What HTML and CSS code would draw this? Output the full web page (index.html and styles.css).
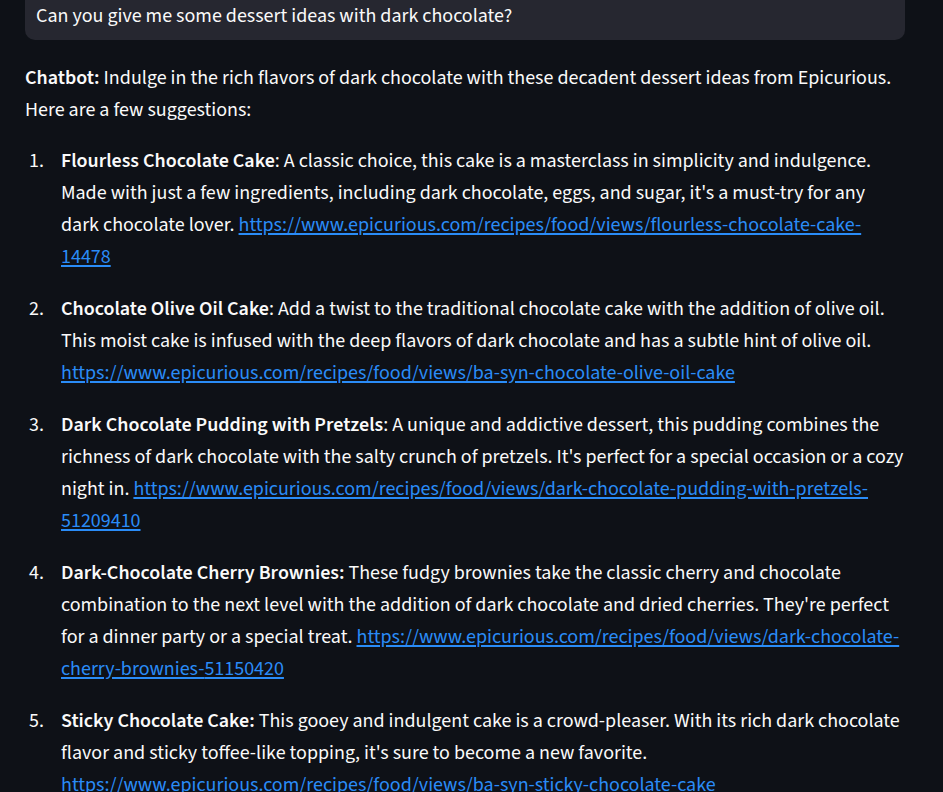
FILE: index.html
```html
<!DOCTYPE html>
<html lang="en">
<head>
<meta charset="utf-8">
<title>Chatbot</title>
<link rel="stylesheet" href="styles.css">
</head>
<body>
<main class="chat">
  <div class="user-msg">Can you give me some dessert ideas with dark chocolate?</div>
  <div class="bot-msg">
    <p class="intro"><strong>Chatbot:</strong> Indulge in the rich flavors of dark chocolate with these decadent dessert ideas from Epicurious. Here are a few suggestions:</p>
    <ol class="ideas">
      <li><div><strong>Flourless Chocolate Cake</strong>: A classic choice, this cake is a masterclass in simplicity and indulgence. Made with just a few ingredients, including dark chocolate, eggs, and sugar, it's a must-try for any dark chocolate lover. <a href="#">https://www.epicurious.com/recipes/food/views/flourless-chocolate-cake-<wbr>14478</a></div></li>
      <li><div><strong>Chocolate Olive Oil Cake</strong>: Add a twist to the traditional chocolate cake with the addition of olive oil. This moist cake is infused with the deep flavors of dark chocolate and has a subtle hint of olive oil. <a href="#">https://www.epicurious.com/recipes/food/views/ba-syn-chocolate-olive-oil-cake</a></div></li>
      <li><div><strong>Dark Chocolate Pudding with Pretzels</strong>: A unique and addictive dessert, this pudding combines the richness of dark chocolate with the salty crunch of pretzels. It's perfect for a special occasion or a cozy night in. <a href="#">https://www.epicurious.com/recipes/food/views/dark-chocolate-pudding-with-pretzels-<wbr>51209410</a></div></li>
      <li><div><strong>Dark-Chocolate Cherry Brownies:</strong> These fudgy brownies take the classic cherry and chocolate combination to the next level with the addition of dark chocolate and dried cherries. They're perfect for a dinner party or a special treat. <a href="#">https://www.epicurious.com/recipes/food/views/dark-chocolate-<wbr>cherry-brownies-<wbr>51150420</a></div></li>
      <li><div><strong>Sticky Chocolate Cake:</strong> This gooey and indulgent cake is a crowd-pleaser. With its rich dark chocolate flavor and sticky toffee-like topping, it's sure to become a new favorite. <a href="#">https://www.epicurious.com/recipes/food/views/ba-syn-sticky-chocolate-cake</a></div></li>
    </ol>
  </div>
</main>
</body>
</html>
```
FILE: styles.css
```css
html, body {
  margin: 0;
  padding: 0;
  background: #0e1117;
  overflow: hidden;
}

body {
  color: #fafafa;
  font-family: "Source Sans 3", "Lato", "Liberation Sans", sans-serif;
  font-size: 20px;
  line-height: 32px;
}

.chat {
  padding: 0 0 0 25px;
}

.user-msg {
  width: 880px;
  box-sizing: border-box;
  margin-top: -20px;
  padding: 20px 11px 8px;
  background: #262730;
  border-radius: 10px;
}

.bot-msg {
  width: 880px;
  margin-top: 22px;
}

.intro {
  margin: 0 0 19px;
}

strong {
  font-weight: 600;
}

.ideas {
  list-style: none;
  counter-reset: idea;
  margin: 0;
  padding: 0;
  display: flex;
  flex-direction: column;
  gap: 20px;
}

.ideas li {
  counter-increment: idea;
  display: grid;
  grid-template-columns: 36px 1fr;
}

.ideas li::before {
  content: counter(idea) ".";
  text-align: right;
  padding-right: 17px;
}

a {
  color: #2a8cf7;
  text-decoration: underline;
  text-underline-offset: 2px;
}
```
